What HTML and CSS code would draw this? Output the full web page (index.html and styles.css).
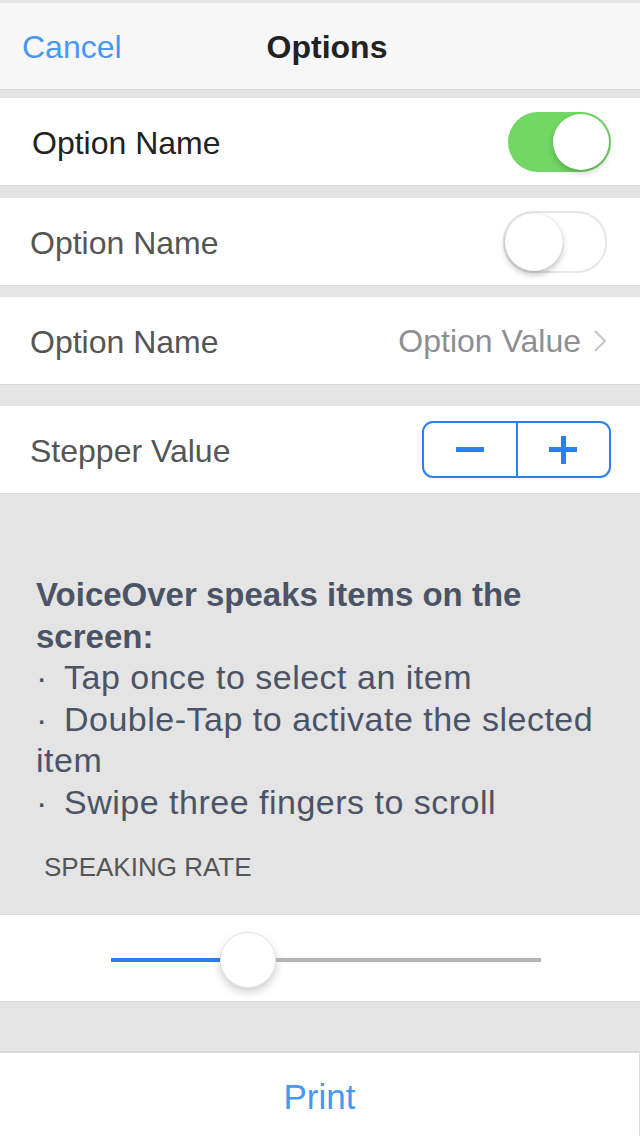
FILE: index.html
```html
<!DOCTYPE html>
<html>
<head>
<meta charset="utf-8">
<title>Options</title>
<link rel="stylesheet" href="styles.css">
</head>
<body>
<div class="screen">
  <header class="navbar">
    <span class="nav-cancel">Cancel</span>
    <span class="nav-title">Options</span>
    <span class="nav-spacer"></span>
  </header>

  <div class="row row-first">
    <span class="label label-dark">Option Name</span>
    <span class="toggle toggle-on"><span class="knob"></span></span>
  </div>

  <div class="row row-second">
    <span class="label">Option Name</span>
    <span class="toggle toggle-off"><span class="knob"></span></span>
  </div>

  <div class="row row-third">
    <span class="label">Option Name</span>
    <span class="value"><span class="value-text">Option Value</span>
      <svg class="chevron" width="14" height="24" viewBox="0 0 14 24"><polyline points="2,2 12,12 2,22" fill="none" stroke="#c7c7cc" stroke-width="2.2"/></svg>
    </span>
  </div>

  <div class="row row-fourth">
    <span class="label">Stepper Value</span>
    <div class="stepper">
      <span class="step step-minus"><span class="bar-h"></span></span>
      <span class="step step-plus"><span class="bar-h"></span><span class="bar-v"></span></span>
    </div>
  </div>

  <section class="info">
    <p class="info-title">VoiceOver speaks items on the screen:</p>
    <p class="info-line">Tap once to select an item</p>
    <p class="info-line">Double-Tap to activate the slected item</p>
    <p class="info-line">Swipe three fingers to scroll</p>
    <p class="info-caption">SPEAKING RATE</p>
  </section>

  <div class="row slider-row">
    <div class="slider">
      <span class="track track-fill"></span>
      <span class="thumb"></span>
      <span class="track track-rest"></span>
    </div>
  </div>

  <div class="print-row">Print</div>
</div>
</body>
</html>
```
FILE: styles.css
```css
* { box-sizing: border-box; }

html, body {
  margin: 0;
  padding: 0;
}

body {
  background: #e4e4e4;
  font-family: "Liberation Sans", Arial, sans-serif;
  width: 640px;
  height: 1136px;
  overflow: hidden;
}

.screen {
  padding-top: 3px;
  display: flex;
  flex-direction: column;
  height: 1136px;
}

.navbar {
  height: 87px;
  background: #f7f7f7;
  border-bottom: 1px solid #d9d9d9;
  display: grid;
  grid-template-columns: 1fr auto 1fr;
  align-items: center;
  padding: 3px 22px 0;
  font-size: 32px;
}

.nav-cancel {
  color: #4797f3;
  justify-self: start;
}

.nav-title {
  color: #222;
  font-weight: bold;
  margin-left: 14px;
}

.row {
  height: 88px;
  background: #fff;
  border-bottom: 1px solid #d8d8d8;
  display: flex;
  align-items: center;
  justify-content: space-between;
  padding: 0 30px;
  font-size: 32px;
}

.row-first { margin-top: 8px; padding-left: 32px; }
.row-second { margin-top: 12px; }
.row-third { margin-top: 11px; }
.row-fourth { margin-top: 21px; }

.label {
  color: #555;
  padding-top: 4px;
}
.label-dark { color: #222; }

.toggle {
  display: flex;
  align-items: center;
  width: 103px;
  height: 60px;
  border-radius: 30px;
  padding: 2px;
}

.toggle-on {
  background: #72d764;
  justify-content: flex-end;
  margin-right: -1px;
}

.toggle-off {
  background: #fff;
  border: 2px solid #e6e6e6;
  justify-content: flex-start;
  margin-right: 3px;
  height: 62px;
  width: 104px;
  padding: 0;
}

.knob {
  width: 56px;
  height: 56px;
  border-radius: 50%;
  background: #fff;
  box-shadow: 0 3px 6px rgba(0, 0, 0, 0.22);
}

.toggle-off .knob {
  width: 58px;
  height: 58px;
  box-shadow: 0 4px 6px rgba(0, 0, 0, 0.22), 0 0 1px rgba(0, 0, 0, 0.25);
}

.value {
  color: #8e8e93;
  display: flex;
  align-items: center;
  gap: 12px;
  margin-right: 3px;
}

.value-text { padding-top: 2px; }

.chevron { display: block; }

.stepper {
  display: flex;
  width: 189px;
  height: 57px;
  border: 2px solid #2a7ff2;
  border-radius: 11px;
  margin-right: -1px;
}

.step {
  flex: 1;
  position: relative;
  display: flex;
  align-items: center;
  justify-content: center;
}

.step-minus { border-right: 2px solid #2a7ff2; }

.bar-h {
  display: block;
  width: 28px;
  height: 5px;
  background: #2a7ff2;
}

.step-plus .bar-v {
  position: absolute;
  width: 5px;
  height: 28px;
  background: #2a7ff2;
}

.info {
  padding: 80px 36px 32px;
  color: #4b5466;
  font-size: 34px;
  line-height: 41.5px;
}

.info p { margin: 0; }

.info-title {
  font-weight: bold;
  font-size: 33px;
}

.info-line {
  letter-spacing: 0.5px;
}

.info-line::before {
  content: "·";
  display: inline-block;
  width: 28px;
  letter-spacing: 0;
}

.info-caption {
  margin-top: 29px !important;
  font-size: 26px;
  line-height: 30px;
  color: #555;
  padding-left: 8px;
}

.slider-row {
  border-top: 1px solid #d8d8d8;
  justify-content: flex-start;
  padding: 0 0 0 111px;
}

.slider {
  display: flex;
  align-items: center;
  width: 430px;
  margin-top: 4px;
}

.track {
  height: 4px;
}

.track-fill {
  width: 109px;
  background: #2e7cf6;
}

.track-rest {
  flex: 1;
  background: #b4b4b4;
}

.thumb {
  width: 56px;
  height: 56px;
  border-radius: 50%;
  background: #fff;
  border: 1px solid #e6e6e6;
  box-shadow: 0 4px 8px rgba(0, 0, 0, 0.2);
  flex: none;
}

.print-row {
  margin-top: auto;
  height: 85px;
  background: #fff;
  border-top: 2px solid #dadada;
  border-right: 1px solid #dcdcdc;
  display: flex;
  align-items: center;
  justify-content: center;
  color: #4797f3;
  font-size: 35px;
  padding-top: 4px;
}
```
